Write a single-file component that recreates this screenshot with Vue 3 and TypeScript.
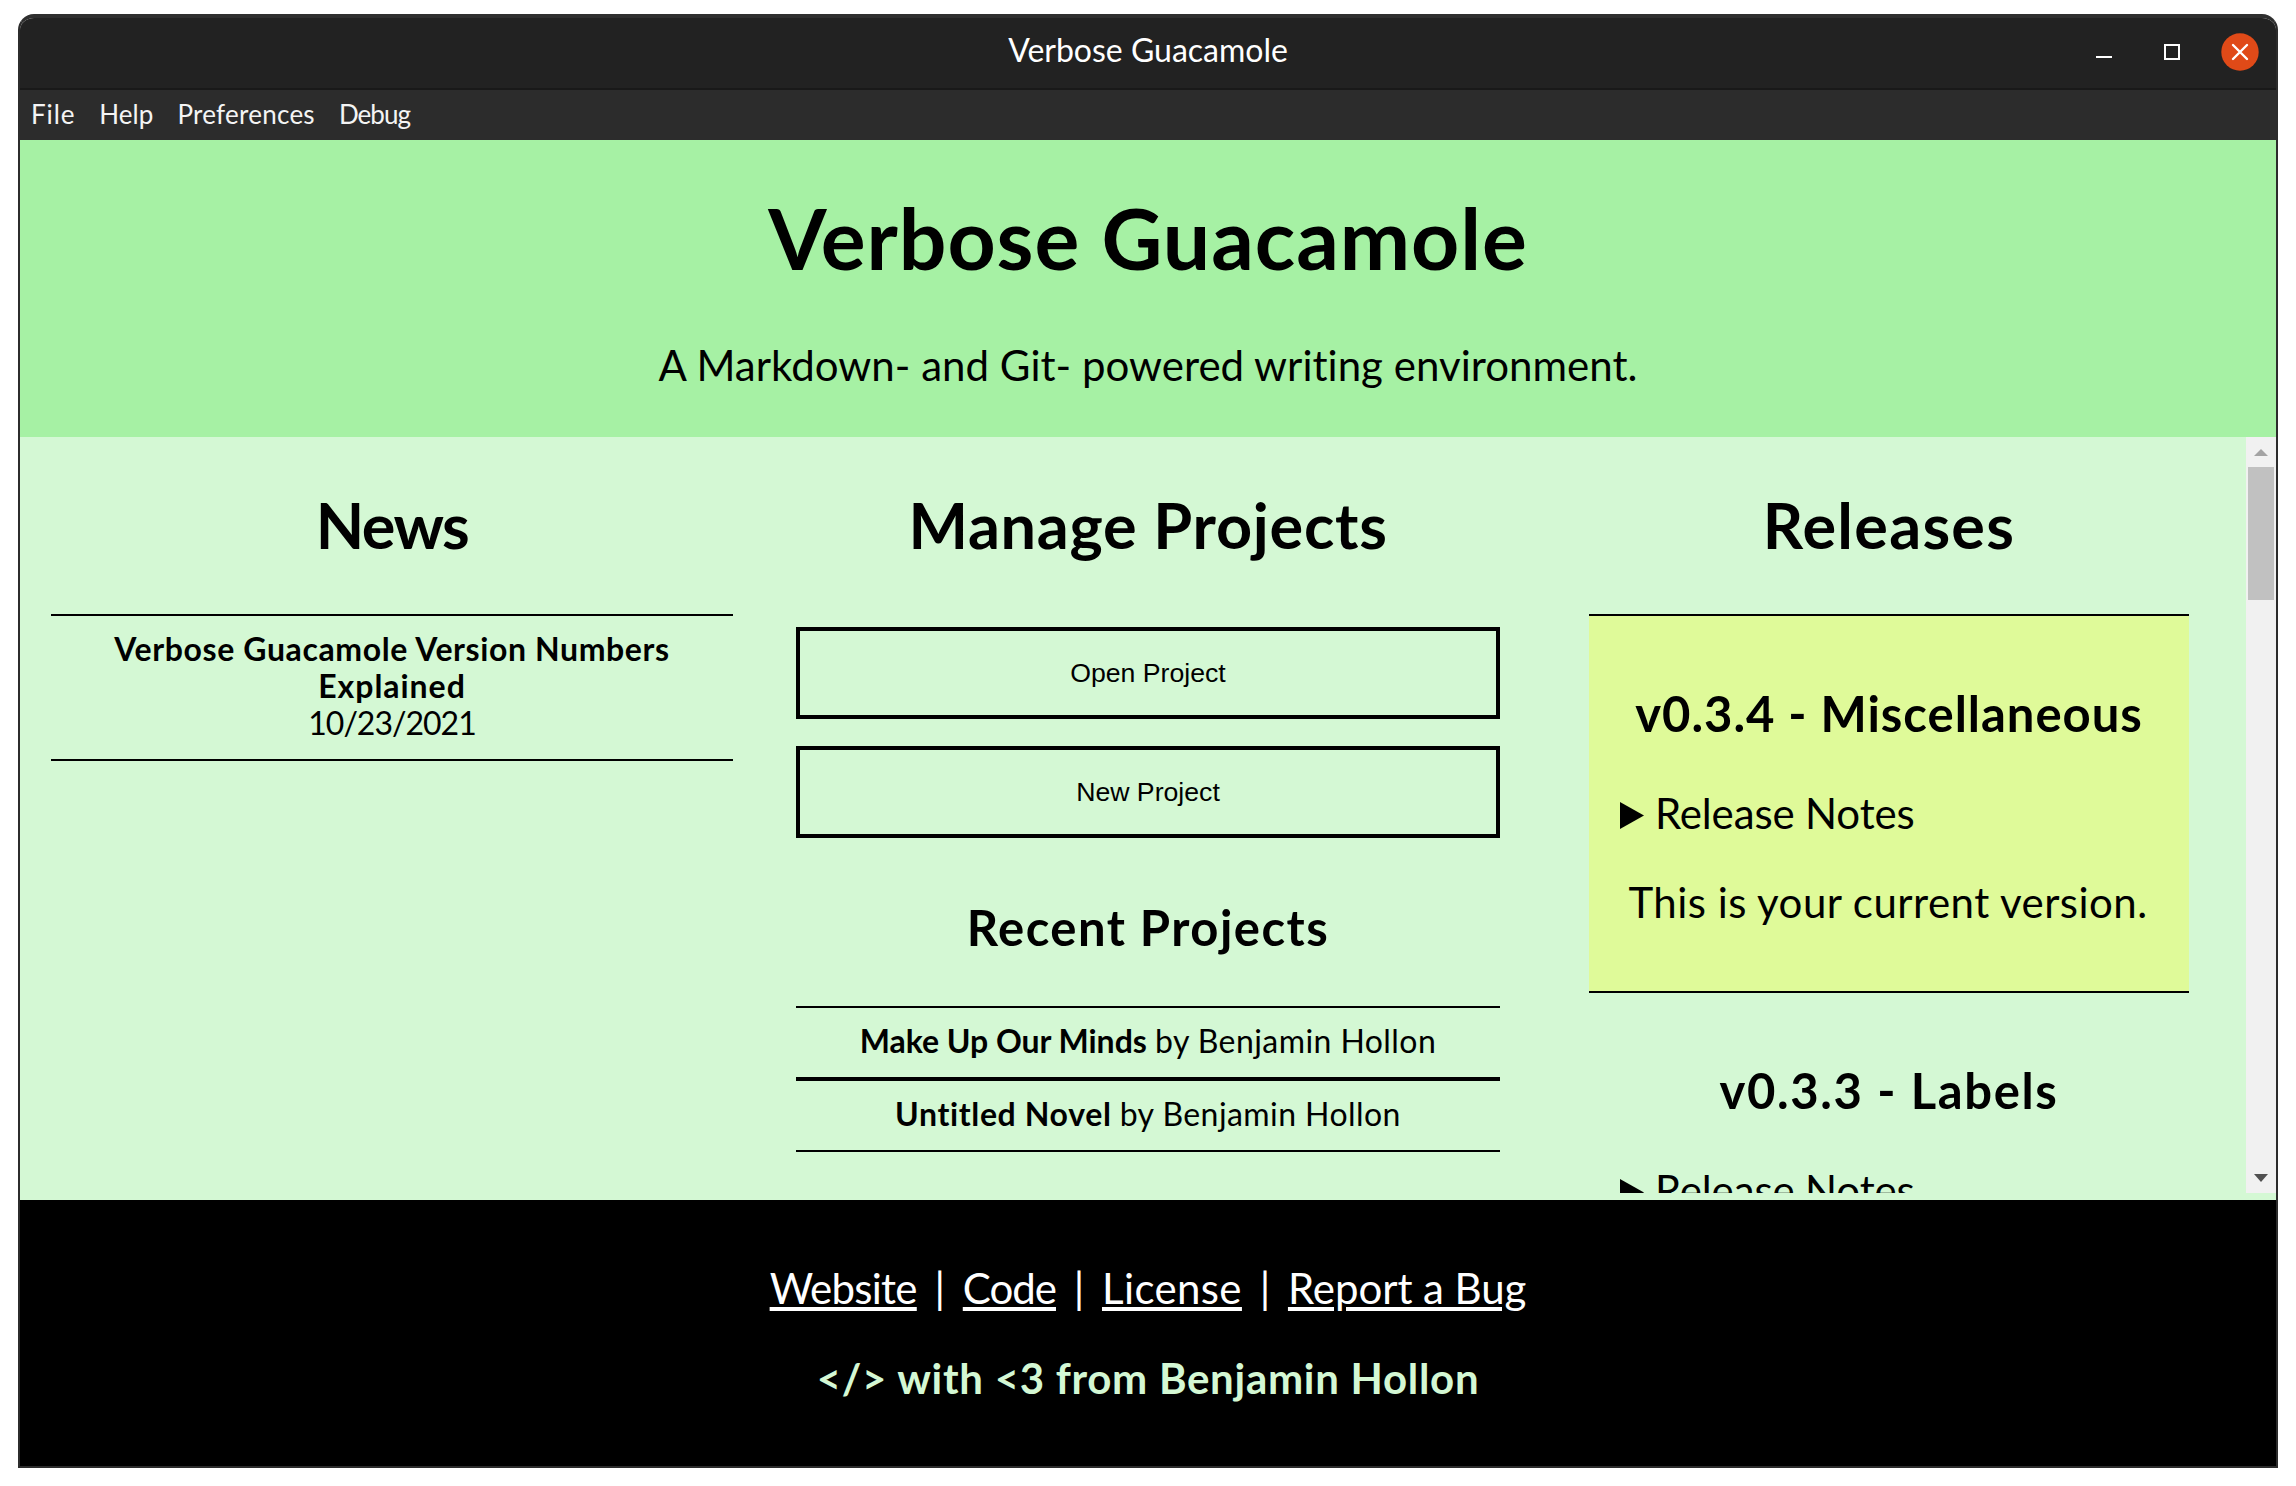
<script setup lang="ts">
interface Project { title: string; author: string; key: string }
interface Release { name: string; current: boolean; key: string }
interface FooterLink { label: string; key: string }

const menus = ['File', 'Help', 'Preferences', 'Debug']

const projects: Project[] = [
  { title: 'Make Up Our Minds', author: 'Benjamin Hollon', key: 'minds' },
  { title: 'Untitled Novel', author: 'Benjamin Hollon', key: 'novel' },
]

const releases: Release[] = [
  { name: 'v0.3.4 - Miscellaneous', current: true, key: 'misc' },
  { name: 'v0.3.3 - Labels', current: false, key: 'labels' },
]

const links: FooterLink[] = [
  { label: 'Website', key: 'website' },
  { label: 'Code', key: 'code' },
  { label: 'License', key: 'license' },
  { label: 'Report a Bug', key: 'report' },
]
</script>

<template>
  <div class="window">
    <div class="titlebar">
      <span class="titlebar-side"></span>
      <span class="titlebar-text">Verbose Guacamole</span>
      <span class="titlebar-side controls">
        <svg class="ctl" width="16" height="16" viewBox="0 0 16 16"><rect x="0" y="12" width="16" height="2" fill="#fff" /></svg>
        <svg class="ctl" width="16" height="16" viewBox="0 0 16 16"><rect x="1" y="1" width="14" height="14" fill="none" stroke="#fff" stroke-width="2" /></svg>
        <svg class="close" width="38" height="38" viewBox="0 0 38 38">
          <circle cx="19" cy="19" r="18.7" fill="#e04a18" />
          <path d="M12 12 L26 26 M26 12 L12 26" stroke="#fff" stroke-width="2.4" stroke-linecap="round" />
        </svg>
      </span>
    </div>
    <nav class="menubar">
      <span v-for="m in menus" :key="m" class="menu" :class="'menu-' + m.toLowerCase()">{{ m }}</span>
    </nav>

    <header class="hero">
      <h1>Verbose Guacamole</h1>
      <p>A Markdown- and Git- powered writing environment.</p>
    </header>

    <main class="content">
      <section class="news">
        <h2 class="h-news">News</h2>
        <div class="item">
          <strong class="headline">Verbose Guacamole Version Numbers</strong>
          <strong class="headline tail">Explained</strong>
          <span class="date">10/23/2021</span>
        </div>
      </section>

      <section class="manage">
        <h2 class="h-manage">Manage Projects</h2>
        <div class="actions">
          <button>Open Project</button>
          <button>New Project</button>
        </div>
        <h3 class="recent">Recent Projects</h3>
        <div v-for="p in projects" :key="p.key" class="item">
          <strong :class="p.key">{{ p.title }}</strong> <span class="by">by {{ p.author }}</span>
        </div>
      </section>

      <section class="releases">
        <h2 class="h-releases">Releases</h2>
        <article v-for="r in releases" :key="r.key" class="release" :class="{ current: r.current }">
          <h3 :class="r.key">{{ r.name }}</h3>
          <div class="notes">
            <svg width="24" height="27" viewBox="0 0 24 27"><path d="M0 0 L24 13.5 L0 27 Z" /></svg>
            <span>Release Notes</span>
          </div>
          <p v-if="r.current">This is your current version.</p>
        </article>
      </section>

      <div class="scrollbar">
        <svg class="arrow" width="14" height="7" viewBox="0 0 14 7"><path d="M7 0 L14 7 L0 7 Z" fill="#a3a3a3" /></svg>
        <div class="thumb"></div>
        <svg class="arrow" width="14" height="8" viewBox="0 0 14 8"><path d="M0 0 L14 0 L7 8 Z" fill="#505050" /></svg>
      </div>
    </main>

    <footer class="footer">
      <div class="links">
        <template v-for="(l, i) in links" :key="l.key">
          <span v-if="i > 0" class="sep">|</span>
          <a :class="l.key">{{ l.label }}</a>
        </template>
      </div>
      <div class="credit">&lt;/&gt; with &lt;3 from Benjamin Hollon</div>
    </footer>
  </div>
</template>

<style>
body { background: #fff; }
</style>

<style scoped>
.window {
  box-sizing: border-box;
  width: 2260px;
  height: 1454px;
  margin: 14px 18px 18px;
  border: 2px solid #2c2c2c;
  border-top: 4px solid #2f2f2f;
  border-radius: 16px 16px 0 0;
  overflow: hidden;
  display: flex;
  flex-direction: column;
  font-family: "Trebuchet MS", Lato, sans-serif;
  color: #000;
}
h1, h2, h3, p { margin: 0; }

.titlebar {
  box-sizing: border-box;
  height: 72px;
  flex: none;
  display: flex;
  background: #222;
  border-bottom: 2px solid #191919;
  color: #fff;
}
.titlebar-side { flex: 1 1 0; }
.titlebar-text { font-family: Lato, sans-serif; font-size: 32px; line-height: 63px; }
.controls {
  display: flex;
  justify-content: flex-end;
  align-items: center;
  height: 68px;
}
.ctl { margin-right: 52px; }
.ctl + .ctl { margin-right: 41px; }
.close { margin-right: 17px; }

.menubar {
  height: 50px;
  flex: none;
  display: flex;
  gap: 24px;
  padding-left: 11px;
  background: #2c2c2c;
  color: #f4f4f4;
  font-size: 26px;
  line-height: 49px;
}
.menu-file { letter-spacing: 0.034em; }
.menu-help { letter-spacing: 0.002em; }
.menu-preferences { letter-spacing: 0.01em; }
.menu-debug { letter-spacing: -0.036em; }

.hero {
  box-sizing: border-box;
  height: 297px;
  flex: none;
  padding-top: 48px;
  background: #a6f1a4;
  text-align: center;
}
.hero h1 { font-size: 84px; line-height: 99px; letter-spacing: 0.0112em; }
.hero p { margin-top: 54px; font-size: 42px; line-height: 49px; letter-spacing: 0.0005em; }

.content {
  height: 763px;
  flex: none;
  box-sizing: border-box;
  padding: 0 0 7px 31px;
  display: flex;
  background: #d4f8d4;
  text-align: center;
}
section { padding-top: 51px; box-sizing: border-box; }
h2 { font-size: 63px; line-height: 73px; }
.h-news { letter-spacing: -0.025em; margin-bottom: 53px; }
.h-manage { letter-spacing: 0.0115em; margin-bottom: 66px; }
.h-releases { letter-spacing: 0.02em; margin-bottom: 53px; }
h3 { font-size: 49px; line-height: 57px; }

.news { width: 682px; }
.manage { width: 704px; margin-left: 63px; }
.releases { width: 600px; margin-left: 89px; overflow: hidden; }

.item {
  border-top: 2px solid #000;
  border-bottom: 2px solid #000;
  padding: 14px 0 18px;
  font-size: 32px;
  line-height: 37px;
}
.headline { display: block; letter-spacing: 0.019em; }
.tail { letter-spacing: 0.03em; }
.date { display: block; letter-spacing: -0.031em; }

.actions { display: flex; flex-direction: column; gap: 27px; }
button {
  height: 92px;
  border: 4px solid #000;
  padding: 0;
  background: transparent;
  color: #000;
  font: 26.667px "Liberation Sans", Arial, sans-serif;
}
.recent { margin: 61px 0 50px; letter-spacing: 0.03em; }
.minds { letter-spacing: -0.001em; }
.novel { letter-spacing: 0.02em; }
.by { letter-spacing: 0.0135em; }

.release {
  box-sizing: border-box;
  height: 379px;
  margin-bottom: -2px;
  border-top: 2px solid #000;
  border-bottom: 2px solid #000;
  padding: 69px 31px 0;
  white-space: nowrap;
}
.current { background: #dffa99; }
.misc { letter-spacing: 0.02em; }
.labels { letter-spacing: 0.0335em; }
.notes {
  display: flex;
  gap: 11px;
  margin-top: 47px;
  font-size: 42px;
  line-height: 49px;
  letter-spacing: -0.0033em;
}
.notes svg { margin-top: 13px; }
.release p { margin: 40px -10px 0 -12px; font-size: 42px; line-height: 49px; letter-spacing: 0.0112em; }

.scrollbar {
  box-sizing: border-box;
  width: 30px;
  margin-left: auto;
  padding: 12px 0 11px;
  display: flex;
  flex-direction: column;
  align-items: center;
  background: #f1f1f1;
}
.thumb { width: 26px; height: 133px; margin: 11px 0 auto; background: #c1c1c1; }
.arrow { flex: none; }

.footer {
  flex: 1;
  padding-top: 64px;
  background: #000;
  color: #fff;
  font-size: 42px;
  line-height: 49px;
}
.links { display: flex; justify-content: center; }
.sep { width: 46px; text-align: center; }
a {
  text-decoration: underline;
  text-decoration-thickness: 4px;
  text-underline-offset: 3px;
}
.website { letter-spacing: -0.0172em; }
.code { letter-spacing: -0.0235em; }
.license { letter-spacing: 0.009em; }
.report { letter-spacing: -0.0015em; }
.credit {
  margin-top: 41px;
  text-align: center;
  font-weight: 700;
  letter-spacing: 0.017em;
  color: #d4f8d4;
}
</style>
